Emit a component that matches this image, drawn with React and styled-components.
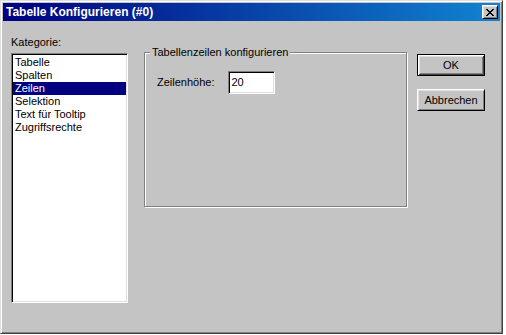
import React from "react";
import styled, { createGlobalStyle } from "styled-components";

const FACE = "#c4c4c4";

const GlobalStyle = createGlobalStyle`
  html, body {
    margin: 0;
    padding: 0;
    background: #ffffff;
  }
  body {
    font-family: "Liberation Sans", Arial, sans-serif;
    font-size: 11px;
    color: #000;
  }
`;

const Window = styled.div`
  box-sizing: border-box;
  width: 503px;
  height: 334px;
  background: ${FACE};
  border: 1px solid;
  border-color: #dfdfdf #404040 #404040 #dfdfdf;
  box-shadow: inset 1px 1px #ffffff, inset -1px -1px #808080;
  padding: 2px;
  display: flex;
  flex-direction: column;
`;

const TitleBar = styled.div`
  height: 18px;
  display: flex;
  align-items: center;
  justify-content: space-between;
  padding: 0 2px 0 3px;
  background: linear-gradient(to right, #000080, #1084d0);
`;

const Title = styled.span`
  color: #fff;
  font-weight: bold;
  font-size: 12px;
  line-height: 18px;
`;

const CloseButton = styled.div`
  box-sizing: border-box;
  width: 16px;
  height: 14px;
  background: ${FACE};
  border: 1px solid;
  border-color: #ffffff #000000 #000000 #ffffff;
  box-shadow: inset 1px 1px #dfdfdf, inset -1px -1px #808080;
  display: flex;
  align-items: center;
  justify-content: center;
`;

const Content = styled.div`
  display: flex;
  align-items: flex-start;
  padding: 15px 0 0 8px;
`;

const LeftColumn = styled.div`
  width: 117px;
  display: flex;
  flex-direction: column;
`;

const Label = styled.div`
  line-height: 13px;
  white-space: nowrap;
`;

const ListBox = styled.div`
  box-sizing: border-box;
  margin-top: 4px;
  height: 250px;
  background: #fff;
  border: 1px solid;
  border-color: #808080 #ffffff #ffffff #808080;
  box-shadow: inset 1px 1px #000000, inset -1px -1px #dfdfdf;
  padding: 2px 1px 2px 1px;
`;

const ListItem = styled.div`
  height: 13px;
  line-height: 13px;
  padding-left: 2px;
  white-space: nowrap;
  background: ${(p) => (p.$selected ? "#000080" : "transparent")};
  color: ${(p) => (p.$selected ? "#ffffff" : "#000000")};
`;

const GroupBox = styled.div`
  position: relative;
  box-sizing: border-box;
  margin: 16px 0 0 16px;
  width: 263px;
  height: 155px;
  border: 1px solid #808080;
  box-shadow: inset 1px 1px #ffffff, 1px 1px #ffffff;
  padding: 18px 12px 0;
`;

const Legend = styled.span`
  position: absolute;
  top: -7px;
  left: 5px;
  padding: 0 2px 0 2px;
  line-height: 13px;
  background: ${FACE};
  white-space: nowrap;
`;

const FieldRow = styled.div`
  display: flex;
  align-items: center;
  gap: 13px;
`;

const TextField = styled.div`
  box-sizing: border-box;
  width: 47px;
  height: 23px;
  background: #fff;
  border: 1px solid;
  border-color: #808080 #ffffff #ffffff #808080;
  box-shadow: inset 1px 1px #000000, inset -1px -1px #dfdfdf;
  padding: 3px 3px 0;
  line-height: 14px;
`;

const ButtonColumn = styled.div`
  display: flex;
  flex-direction: column;
  gap: 13px;
  margin: 18px 0 0 10px;
`;

const Button = styled.div`
  box-sizing: border-box;
  width: 68px;
  height: 22px;
  display: flex;
  align-items: center;
  justify-content: center;
  background: ${FACE};
  border: 1px solid;
  border-color: ${(p) =>
    p.$default ? "#000000" : "#ffffff #000000 #000000 #ffffff"};
  box-shadow: ${(p) =>
    p.$default
      ? "inset 1px 1px #ffffff, inset -1px -1px #404040, inset 2px 2px #dfdfdf, inset -2px -2px #808080"
      : "inset 1px 1px #dfdfdf, inset -1px -1px #808080"};
`;

const CloseIcon = () => (
  <svg width="8" height="7" viewBox="0 0 8 7" shapeRendering="crispEdges">
    <path
      d="M0 0h2v1h1v1h2V1h1V0h2v1H7v1H6v1H5v1h1v1h1v1h1v1H6V6H5V5H3v1H2v1H0V6h1V5h1V4h1V3H2V2H1V1H0z"
      fill="#000"
    />
  </svg>
);

const categories = [
  "Tabelle",
  "Spalten",
  "Zeilen",
  "Selektion",
  "Text für Tooltip",
  "Zugriffsrechte",
];

export default function App() {
  return (
    <>
      <GlobalStyle />
      <Window>
        <TitleBar>
          <Title>Tabelle Konfigurieren (#0)</Title>
          <CloseButton>
            <CloseIcon />
          </CloseButton>
        </TitleBar>
        <Content>
          <LeftColumn>
            <Label>Kategorie:</Label>
            <ListBox>
              {categories.map((c) => (
                <ListItem key={c} $selected={c === "Zeilen"}>
                  {c}
                </ListItem>
              ))}
            </ListBox>
          </LeftColumn>
          <GroupBox>
            <Legend>Tabellenzeilen konfigurieren</Legend>
            <FieldRow>
              <Label>Zeilenhöhe:</Label>
              <TextField>20</TextField>
            </FieldRow>
          </GroupBox>
          <ButtonColumn>
            <Button $default>OK</Button>
            <Button>Abbrechen</Button>
          </ButtonColumn>
        </Content>
      </Window>
    </>
  );
}
